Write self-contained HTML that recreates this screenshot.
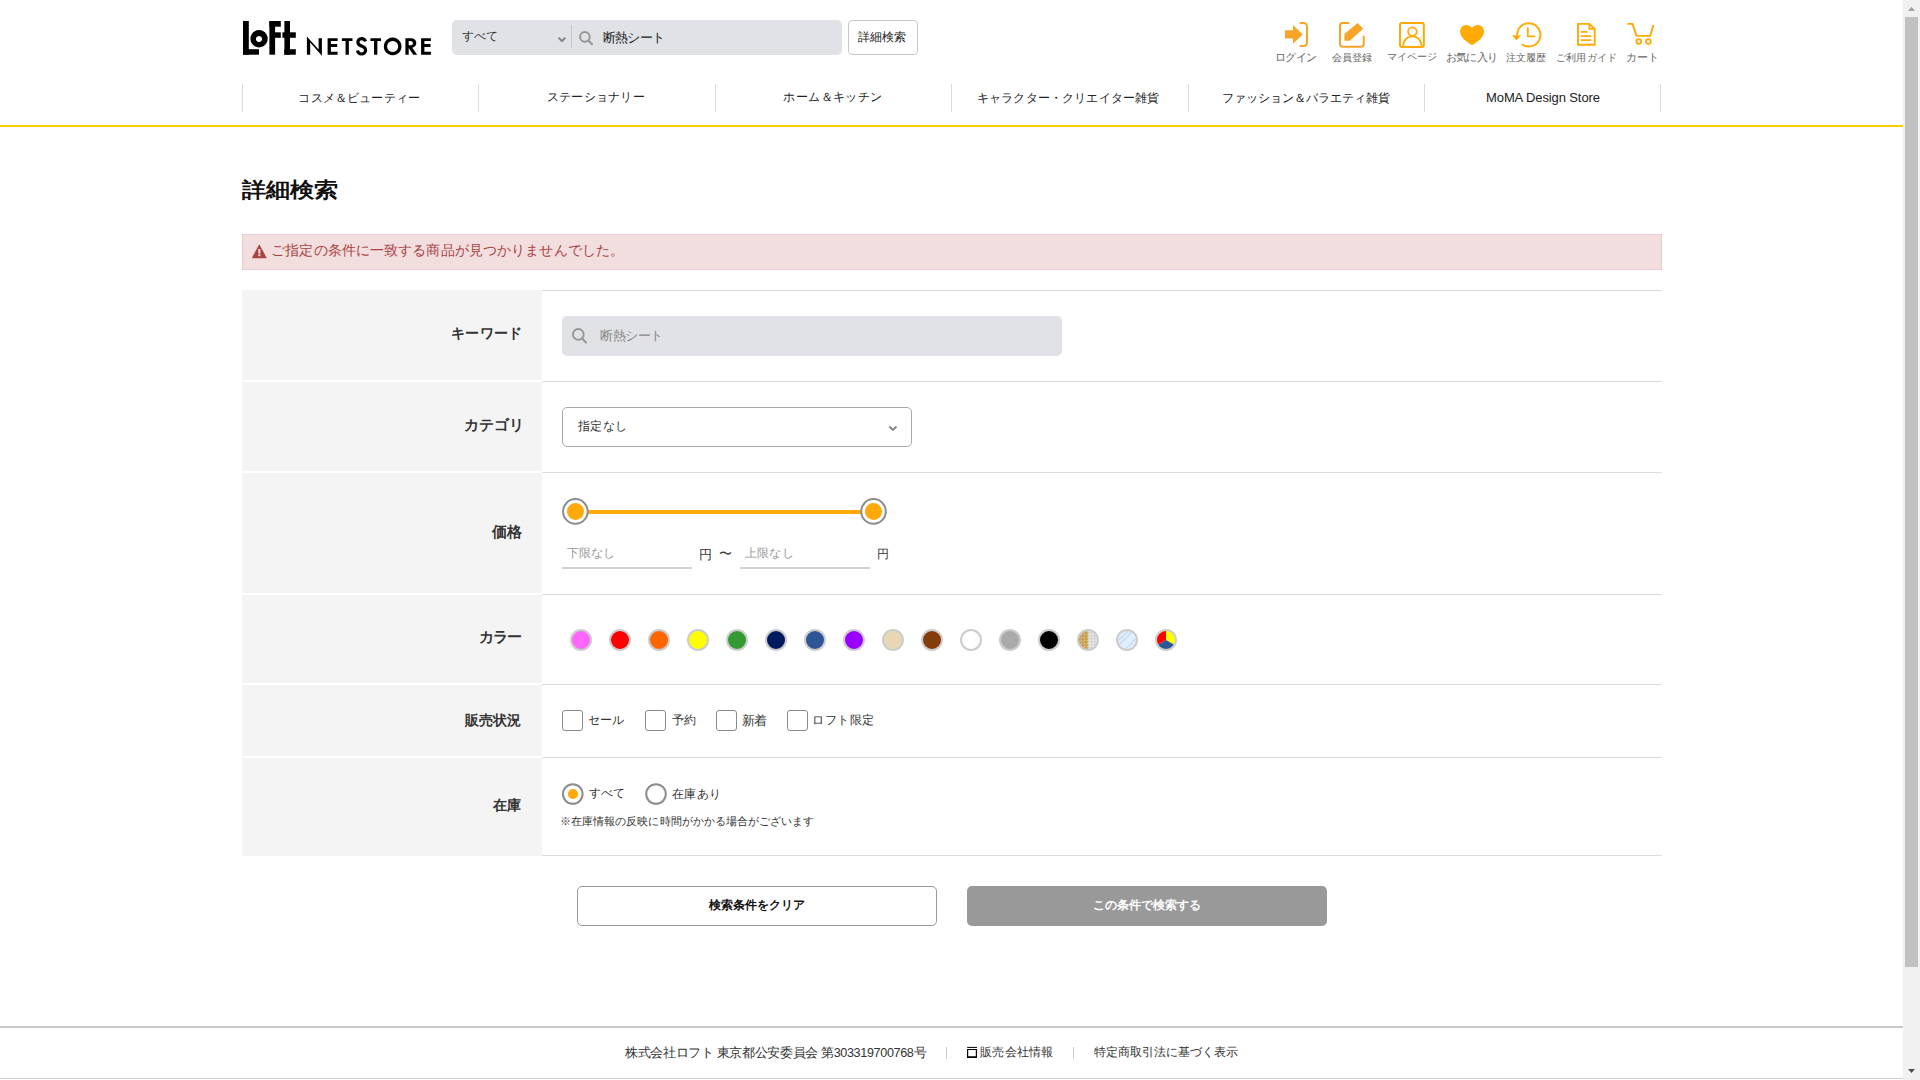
<!DOCTYPE html>
<html lang="ja"><head><meta charset="utf-8"><title>詳細検索 | ロフト公式通販サイト</title>
<style>
*{box-sizing:border-box;margin:0;padding:0}
html,body{width:1920px;height:1080px;overflow:hidden;background:#fff}
body{font-family:"Liberation Sans",sans-serif;color:#222;position:relative}
.a{position:absolute}
.t{position:absolute;white-space:nowrap;line-height:1}
svg{position:absolute;overflow:visible}
</style></head>
<body>
<div class="a" style="left:1903px;top:0;width:17px;height:1080px;background:#f1f1f1"></div>
<div class="a" style="left:1905px;top:17px;width:13px;height:950px;background:#c1c1c1"></div>
<svg style="left:0;top:0" width="1920" height="1080"><path d="M1908 11h7l-3.5-4.3z" fill="#a3a3a3"/><path d="M1908 1069h7l-3.5 4z" fill="#505050"/></svg>
<svg style="left:0;top:0" width="440" height="70">
<g fill="#000">
<rect x="243" y="21" width="5.8" height="33.7"/><rect x="243" y="49.2" width="16" height="5.5"/>
<path fill-rule="evenodd" d="M259.05 30.1a8.65 8.65 0 1 0 0.001 0zM259 36a3.05 3.05 0 1 1 -0.001 0z"/>
<rect x="269.4" y="21" width="5.7" height="33.7"/><rect x="269.4" y="21" width="11.4" height="5.7"/><rect x="275" y="32.3" width="5.8" height="5.5"/>
<rect x="284.4" y="21" width="5.6" height="33.7"/><rect x="282.4" y="32.3" width="13.4" height="5.5"/><rect x="284.4" y="49.2" width="11.4" height="5.5"/>
<path d="M306.9 36.4L318.6 49.6V38.2H321.9V55.7L310.2 42.6V54.75H306.9Z"/>
<path d="M327.6 38.2H337.6V41.1H330.9V44.1H337.2V46.9H330.9V51.8H337.6V54.75H327.6Z"/>
<path d="M341.9 38.2H352.5V41.1H348.85V54.75H345.55V41.1H341.9Z"/>
<path d="M370.4 38.2H381V41.1H377.35V54.75H374.05V41.1H370.4Z"/>
<path fill-rule="evenodd" d="M392.65 37.6a8.85 8.85 0 1 0 0.001 0zM392.65 41a5.5 5.5 0 1 1 -0.001 0z"/>
<path d="M405.4 38.2H410.6C414.2 38.2 416.3 40.2 416.3 43.1C416.3 45.6 414.8 47.3 412.3 47.8L417.2 54.75H413.3L408.7 48V54.75H405.4ZM408.7 41.1V45.3H410.2C412 45.3 412.9 44.5 412.9 43.2C412.9 41.9 412 41.1 410.2 41.1Z"/>
<path d="M421.1 38.2H430.9V41.1H424.4V44.1H430.5V46.9H424.4V51.8H430.9V54.75H421.1Z"/>
</g>
<path d="M365.6 41.3C364.8 39.5 363.3 38.7 361.6 38.7C359.3 38.7 357.9 40.3 357.9 42.2C357.9 44.6 360 45.5 362 46.3C364.1 47.1 365.6 48.1 365.6 50.2C365.6 52.4 363.9 54 361.6 54C359.3 54 357.9 52.5 357.5 50.5" fill="none" stroke="#000" stroke-width="3.2"/>
</svg>
<div class="a" style="left:452px;top:20px;width:390px;height:35px;background:#e1e2e6;border-radius:5px"></div>
<div class="a" style="left:571px;top:25px;width:1px;height:23px;background:#c6c6c8"></div>
<svg style="left:0;top:0" width="1" height="1">
<path d="M558.6 37.8L562 41L565.3 37.8" fill="none" stroke="#888" stroke-width="2.1"/>
<circle cx="584.9" cy="36.85" r="4.85" fill="none" stroke="#959595" stroke-width="1.9"/>
<path d="M588.6 40.6L592 44.2" stroke="#959595" stroke-width="2" stroke-linecap="round"/>
</svg>
<div class="a" style="left:848px;top:20px;width:70px;height:35px;border:1px solid #c8c8c8;border-radius:4px;background:#fff"></div>
<svg style="left:1280px;top:18px" width="32" height="32">
<path d="M5 12.3H13V7L22.7 16.4L13 25.8V20.4H5Z" fill="#f8a428"/>
<path d="M19.7 5H23.2Q27 5 27 8.8V24.2Q27 28 23.2 28H19.7" fill="none" stroke="#f8a428" stroke-width="2"/>
</svg>
<svg style="left:1336px;top:18px" width="32" height="32">
<path d="M12.6 5H6.5Q4 5 4 7.5V25.8Q4 28.7 6.9 28.7H25Q27.7 28.7 27.7 26V18.4" fill="none" stroke="#f8a428" stroke-width="2" stroke-linecap="round"/>
<path d="M8.4 16.1L21.5 5L27.1 10.8L13.9 22.7H8.4Z" fill="#f8a428"/>
</svg>
<svg style="left:1396px;top:18px" width="32" height="32">
<rect x="4" y="5" width="23.85" height="23.9" rx="2" fill="none" stroke="#ffaa05" stroke-width="2"/>
<circle cx="16.4" cy="13.6" r="4.3" fill="none" stroke="#ffaa05" stroke-width="1.8"/>
<path d="M7.1 28.9C7.1 22.3 11.2 18.4 16.4 18.4C21.6 18.4 25.5 22.3 25.5 28.9" fill="none" stroke="#ffaa05" stroke-width="1.8"/>
</svg>
<svg style="left:1456px;top:18px" width="32" height="32">
<path d="M16 10.1C14.6 8 12.4 7 10.2 7C6.6 7 4.1 9.9 4.1 13.6C4.1 19 9.5 23.1 14.2 26.2C15.3 26.9 16.7 26.9 17.8 26.2C22.5 23.1 28 19 28 13.6C28 9.9 25.4 7 21.8 7C19.6 7 17.4 8 16 10.1Z" fill="#ffaa05"/>
</svg>
<svg style="left:1510px;top:18px" width="32" height="32">
<path d="M11.9 26.2A11.6 11.6 0 1 0 7.2 17.3" fill="none" stroke="#ffaa05" stroke-width="1.9"/>
<path d="M2.1 17.3H11.1L6.4 22.6Z" fill="#ffaa05"/>
<path d="M17.8 10.2V18.4H24.4" fill="none" stroke="#ffaa05" stroke-width="1.8" stroke-linecap="round"/>
</svg>
<svg style="left:1570px;top:18px" width="32" height="32">
<path d="M8 5.9H19.4L24.7 11V26.7H8Z" fill="none" stroke="#ffaa05" stroke-width="1.9"/>
<path d="M19.4 5.9V10.8H24.7" fill="none" stroke="#ffaa05" stroke-width="1.8"/>
<path d="M11 13.9H17.5M11 18.1H21.3M11 22.1H21.3" fill="none" stroke="#ffaa05" stroke-width="1.8"/>
</svg>
<svg style="left:1624px;top:18px" width="32" height="32">
<path d="M4.1 5.9H8.6L12.4 17.9H26.2L29.2 7.6" fill="none" stroke="#ffaa05" stroke-width="1.9" stroke-linejoin="round" stroke-linecap="round"/>
<circle cx="14.7" cy="23.6" r="2.4" fill="none" stroke="#ffaa05" stroke-width="1.8"/>
<circle cx="24.4" cy="23.6" r="2.4" fill="none" stroke="#ffaa05" stroke-width="1.8"/>
</svg>
<div class="a" style="left:242px;top:84px;width:1px;height:28px;background:#dcdcdc"></div>
<div class="a" style="left:478px;top:84px;width:1px;height:28px;background:#dcdcdc"></div>
<div class="a" style="left:715px;top:84px;width:1px;height:28px;background:#dcdcdc"></div>
<div class="a" style="left:951px;top:84px;width:1px;height:28px;background:#dcdcdc"></div>
<div class="a" style="left:1188px;top:84px;width:1px;height:28px;background:#dcdcdc"></div>
<div class="a" style="left:1424px;top:84px;width:1px;height:28px;background:#dcdcdc"></div>
<div class="a" style="left:1660px;top:84px;width:1px;height:28px;background:#dcdcdc"></div>
<div class="a" style="left:0;top:125px;width:1903px;height:2px;background:#ffcc00"></div>
<div class="a" style="left:242px;top:234px;width:1420px;height:36px;background:#f2dede;border:1px solid #ebccd1"></div>
<svg style="left:0;top:0" width="1" height="1"><path d="M259.3 244.8L266.4 257.9H252.2Z" fill="#a94442" stroke="#a94442" stroke-width="0.6" stroke-linejoin="round"/><rect x="258.3" y="249" width="2.1" height="4.6" fill="#f2dede"/><rect x="258.3" y="254.4" width="2.1" height="1.8" fill="#f2dede"/></svg>
<div class="a" style="left:242px;top:290px;width:300px;height:90px;background:#f4f4f4"></div>
<div class="a" style="left:242px;top:382px;width:300px;height:89px;background:#f4f4f4"></div>
<div class="a" style="left:242px;top:473px;width:300px;height:120px;background:#f4f4f4"></div>
<div class="a" style="left:242px;top:595px;width:300px;height:88px;background:#f4f4f4"></div>
<div class="a" style="left:242px;top:685px;width:300px;height:71px;background:#f4f4f4"></div>
<div class="a" style="left:242px;top:758px;width:300px;height:98px;background:#f4f4f4"></div>
<div class="a" style="left:542px;top:290px;width:1120px;height:1px;background:#dcdcdc"></div>
<div class="a" style="left:542px;top:381px;width:1120px;height:1px;background:#dcdcdc"></div>
<div class="a" style="left:542px;top:472px;width:1120px;height:1px;background:#dcdcdc"></div>
<div class="a" style="left:542px;top:594px;width:1120px;height:1px;background:#dcdcdc"></div>
<div class="a" style="left:542px;top:684px;width:1120px;height:1px;background:#dcdcdc"></div>
<div class="a" style="left:542px;top:757px;width:1120px;height:1px;background:#dcdcdc"></div>
<div class="a" style="left:542px;top:855px;width:1120px;height:1px;background:#dcdcdc"></div>
<div class="a" style="left:562px;top:316px;width:500px;height:40px;background:#e1e2e6;border-radius:5px"></div>
<svg style="left:0;top:0" width="1" height="1"><circle cx="578.3" cy="334.4" r="5.4" fill="none" stroke="#959595" stroke-width="1.8"/><path d="M582.4 338.7L586 342.6" stroke="#959595" stroke-width="2" stroke-linecap="round"/></svg>
<div class="a" style="left:562px;top:407px;width:350px;height:40px;border:1px solid #aaa;border-radius:5px;background:#fff"></div>
<svg style="left:0;top:0" width="1" height="1"><path d="M889.3 426.4L892.9 429.8L896.5 426.4" fill="none" stroke="#888" stroke-width="2"/></svg>
<svg style="left:0;top:0" width="1" height="1">
<rect x="588" y="510" width="273" height="4" fill="#ffaa0a"/>
<circle cx="575.4" cy="511.4" r="12.3" fill="#fff" stroke="#8c8c8c" stroke-width="2"/>
<circle cx="575.5" cy="511.4" r="8.5" fill="#ffaa0a"/>
<circle cx="873.5" cy="511.4" r="12.3" fill="#fff" stroke="#8c8c8c" stroke-width="2"/>
<circle cx="873.5" cy="511.4" r="8.5" fill="#ffaa0a"/>
</svg>
<div class="a" style="left:562px;top:567px;width:130px;height:2px;background:#d2d2d2"></div>
<div class="a" style="left:740px;top:567px;width:130px;height:2px;background:#d2d2d2"></div>
<svg style="left:0;top:0" width="1" height="1"><defs><pattern id="gold" width="3" height="3" patternUnits="userSpaceOnUse"><rect width="3" height="3" fill="#cfa75c"/><rect x="1" y="1" width="1" height="1" fill="#e3c68a"/><rect x="2" y="0" width="1" height="1" fill="#b8914a"/></pattern><pattern id="silv" width="3" height="3" patternUnits="userSpaceOnUse"><rect width="3" height="3" fill="#dcdcdc"/><rect x="1" y="1" width="1" height="1" fill="#f0f0f0"/><rect x="2" y="2" width="1" height="1" fill="#c8c8c8"/></pattern></defs><circle cx="581" cy="640" r="10" fill="#ff66ff" stroke="#cccccc" stroke-width="2"/><circle cx="620" cy="640" r="10" fill="#ff0000" stroke="#cccccc" stroke-width="2"/><circle cx="659" cy="640" r="10" fill="#ff6600" stroke="#cccccc" stroke-width="2"/><circle cx="698" cy="640" r="10" fill="#ffff00" stroke="#cccccc" stroke-width="2"/><circle cx="737" cy="640" r="10" fill="#339933" stroke="#cccccc" stroke-width="2"/><circle cx="776" cy="640" r="10" fill="#001a5e" stroke="#cccccc" stroke-width="2"/><circle cx="815" cy="640" r="10" fill="#2e5596" stroke="#cccccc" stroke-width="2"/><circle cx="854" cy="640" r="10" fill="#9900ff" stroke="#cccccc" stroke-width="2"/><circle cx="893" cy="640" r="10" fill="#e8d7b4" stroke="#cccccc" stroke-width="2"/><circle cx="932" cy="640" r="10" fill="#843c0c" stroke="#cccccc" stroke-width="2"/><circle cx="971" cy="640" r="10" fill="#ffffff" stroke="#cccccc" stroke-width="2"/><circle cx="1010" cy="640" r="10" fill="#aaaaaa" stroke="#cccccc" stroke-width="2"/><circle cx="1049" cy="640" r="10" fill="#000000" stroke="#cccccc" stroke-width="2"/><path d="M1088 630A10 10 0 0 0 1088 650Z" fill="url(#gold)"/><path d="M1088 630A10 10 0 0 1 1088 650Z" fill="url(#silv)"/><circle cx="1088" cy="640" r="10" fill="none" stroke="#cccccc" stroke-width="2"/><circle cx="1127" cy="640" r="10" fill="#e2eefb"/><path d="M1118.5 640.5L1128 631M1119.5 644.5L1131.5 632.5M1125 649.5L1135.5 639" stroke="#c3dcf7" stroke-width="1.7"/><circle cx="1127" cy="640" r="10" fill="none" stroke="#cccccc" stroke-width="2"/><path d="M1166 640L1166.00 630.00A10 10 0 0 1 1174.66 645.00Z" fill="#ffff00"/><path d="M1166 640L1174.66 645.00A10 10 0 0 1 1157.34 645.00Z" fill="#2e5596"/><path d="M1166 640L1157.34 645.00A10 10 0 0 1 1166.00 630.00Z" fill="#ff0000"/><circle cx="1166" cy="640" r="10" fill="none" stroke="#cccccc" stroke-width="2"/></svg>
<div class="a" style="left:562px;top:710px;width:21px;height:21px;border:1px solid #8a8a8a;border-radius:3px;background:#fff"></div>
<div class="a" style="left:645px;top:710px;width:21px;height:21px;border:1px solid #8a8a8a;border-radius:3px;background:#fff"></div>
<div class="a" style="left:716px;top:710px;width:21px;height:21px;border:1px solid #8a8a8a;border-radius:3px;background:#fff"></div>
<div class="a" style="left:787px;top:710px;width:21px;height:21px;border:1px solid #8a8a8a;border-radius:3px;background:#fff"></div>
<svg style="left:0;top:0" width="1" height="1">
<circle cx="572.8" cy="794" r="9.8" fill="#fff" stroke="#8c8c8c" stroke-width="2"/>
<circle cx="573" cy="794" r="5.1" fill="#ffaa0a"/>
<circle cx="656" cy="794" r="9.8" fill="#fff" stroke="#8c8c8c" stroke-width="2"/>
</svg>
<div class="a" style="left:577px;top:886px;width:360px;height:40px;border:1px solid #9a9a9a;border-radius:5px;background:#fff"></div>
<div class="a" style="left:967px;top:886px;width:360px;height:40px;border-radius:5px;background:#999"></div>
<div class="a" style="left:0;top:1026px;width:1903px;height:2px;background:#c8c8c8"></div>
<div class="a" style="left:0;top:1078px;width:1903px;height:1px;background:#d0d0d0"></div>
<div class="a" style="left:946px;top:1047px;width:1px;height:12px;background:#ccc"></div>
<div class="a" style="left:1073px;top:1047px;width:1px;height:12px;background:#ccc"></div>
<svg style="left:0;top:0" width="1" height="1"><rect x="967.2" y="1046.9" width="9.8" height="1" fill="#000"/><path fill-rule="evenodd" d="M967 1049H977V1058H967ZM968.2 1050.1H975.8V1056.3H968.2Z" fill="#000"/></svg>
<div class="t" style="left:462.0px;top:30.35px;font-size:12.4px;font-weight:400;color:#333;">すべて</div>
<div class="t" style="left:602.6px;top:31.85px;font-size:12.5px;font-weight:400;color:#222;letter-spacing:-0.65px">断熱シート</div>
<div class="t" style="left:858.15px;top:30.9px;font-size:12px;font-weight:400;color:#222;">詳細検索</div>
<div class="t" style="left:1275.0px;top:51.8px;font-size:10.8px;font-weight:400;color:#666;letter-spacing:-0.667px">ログイン</div>
<div class="t" style="left:1332.0px;top:52.8px;font-size:10px;font-weight:400;color:#666;">会員登録</div>
<div class="t" style="left:1387.1px;top:52.3px;font-size:10px;font-weight:400;color:#666;">マイページ</div>
<div class="t" style="left:1445.6px;top:51.8px;font-size:10.5px;font-weight:400;color:#666;letter-spacing:-0.575px">お気に入り</div>
<div class="t" style="left:1506.3px;top:52.8px;font-size:10.0px;font-weight:400;color:#666;">注文履歴</div>
<div class="t" style="left:1555.8px;top:52.8px;font-size:10.0px;font-weight:400;color:#666;letter-spacing:0.24px">ご利用ガイド</div>
<div class="t" style="left:1625.8px;top:51.8px;font-size:10.5px;font-weight:400;color:#666;">カート</div>
<div class="t" style="left:298.4px;top:92.05px;font-size:12.4px;font-weight:400;color:#222;letter-spacing:0.167px">コスメ＆ビューティー</div>
<div class="t" style="left:547.0px;top:91.05px;font-size:12.0px;font-weight:400;color:#222;letter-spacing:0.229px">ステーショナリー</div>
<div class="t" style="left:783.2px;top:91.05px;font-size:12.4px;font-weight:400;color:#222;letter-spacing:0.443px">ホーム＆キッチン</div>
<div class="t" style="left:977.0px;top:91.75px;font-size:12.4px;font-weight:400;color:#222;letter-spacing:0.157px">キャラクター・クリエイター雑貨</div>
<div class="t" style="left:1222.3px;top:91.75px;font-size:12px;font-weight:400;color:#222;">ファッション＆バラエティ雑貨</div>
<div class="t" style="left:1486.05px;top:90.8px;font-size:13px;font-weight:400;color:#222;letter-spacing:-0.106px">MoMA Design Store</div>
<div class="t" style="left:242.2px;top:178.0px;font-size:24px;font-weight:700;color:#111;transform:scaleY(.87);transform-origin:0 11.5px">詳細検索</div>
<div class="t" style="left:271.2px;top:242.9px;font-size:14.4px;font-weight:400;color:#a94442;letter-spacing:0.117px">ご指定の条件に一致する商品が見つかりませんでした。</div>
<div class="t" style="left:450.9px;top:326.25px;font-size:14.0px;font-weight:700;color:#333;letter-spacing:0.35px">キーワード</div>
<div class="t" style="left:463.8px;top:417.0px;font-size:15.0px;font-weight:700;color:#333;">カテゴリ</div>
<div class="t" style="left:491.8px;top:525.25px;font-size:14.5px;font-weight:700;color:#333;">価格</div>
<div class="t" style="left:478.5px;top:629.95px;font-size:14.8px;font-weight:700;color:#333;letter-spacing:-0.75px">カラー</div>
<div class="t" style="left:465.0px;top:712.7px;font-size:14px;font-weight:700;color:#333;">販売状況</div>
<div class="t" style="left:493.4px;top:798.05px;font-size:14px;font-weight:700;color:#333;">在庫</div>
<div class="t" style="left:600.2px;top:330.0px;font-size:12.9px;font-weight:400;color:#888;letter-spacing:-0.5px">断熱シート</div>
<div class="t" style="left:577.9px;top:420.25px;font-size:12.0px;font-weight:400;color:#333;letter-spacing:0.367px">指定なし</div>
<div class="t" style="left:567.0px;top:547.0px;font-size:12px;font-weight:400;color:#999;">下限なし</div>
<div class="t" style="left:699.0px;top:547.95px;font-size:13.0px;font-weight:400;color:#333;">円</div>
<div class="t" style="left:719.0px;top:547.0px;font-size:13.0px;font-weight:400;color:#333;">〜</div>
<div class="t" style="left:744.7px;top:547.0px;font-size:12.0px;font-weight:400;color:#999;letter-spacing:0.333px">上限なし</div>
<div class="t" style="left:877.0px;top:547.95px;font-size:12px;font-weight:400;color:#333;">円</div>
<div class="t" style="left:587.75px;top:714.0px;font-size:12.0px;font-weight:400;color:#333;">セール</div>
<div class="t" style="left:671.7px;top:714.0px;font-size:12px;font-weight:400;color:#333;">予約</div>
<div class="t" style="left:742.3px;top:715.0px;font-size:12.7px;font-weight:400;color:#333;letter-spacing:-1.1px">新着</div>
<div class="t" style="left:812.0px;top:714.0px;font-size:12.4px;font-weight:400;color:#333;letter-spacing:0.5px">ロフト限定</div>
<div class="t" style="left:589.0px;top:787.25px;font-size:12.0px;font-weight:400;color:#333;">すべて</div>
<div class="t" style="left:671.7px;top:787.7px;font-size:12.3px;font-weight:400;color:#333;letter-spacing:0.433px">在庫あり</div>
<div class="t" style="left:559.95px;top:816.2px;font-size:11.4px;font-weight:400;color:#333;letter-spacing:0.068px">※在庫情報の反映に時間がかかる場合がございます</div>
<div class="t" style="left:708.6px;top:899.15px;font-size:12px;font-weight:700;color:#111;">検索条件をクリア</div>
<div class="t" style="left:1092.5px;top:899.25px;font-size:12px;font-weight:700;color:#fff;">この条件で検索する</div>
<div class="t" style="left:624.9px;top:1046.75px;font-size:12.6px;font-weight:400;color:#333;letter-spacing:-0.347px">株式会社ロフト 東京都公安委員会 第303319700768号</div>
<div class="t" style="left:980.2px;top:1046.25px;font-size:12.4px;font-weight:400;color:#333;letter-spacing:0.2px">販売会社情報</div>
<div class="t" style="left:1094.0px;top:1046.25px;font-size:12px;font-weight:400;color:#333;">特定商取引法に基づく表示</div>
</body></html>
